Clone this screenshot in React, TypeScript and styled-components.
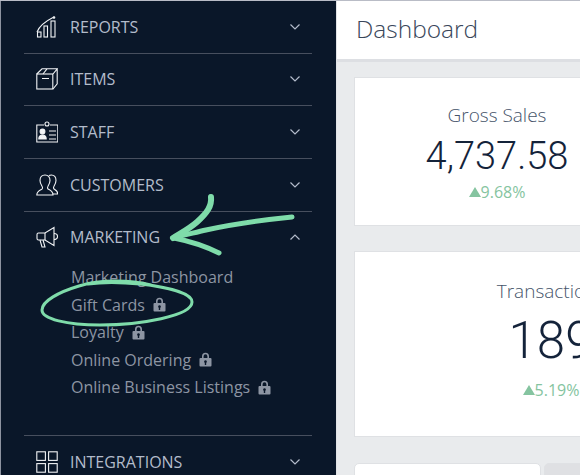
import React from 'react';
import styled, { createGlobalStyle } from 'styled-components';

const GlobalStyle = createGlobalStyle`
  html, body {
    margin: 0;
    padding: 0;
    background: #e9ebed;
  }
`;

const Page = styled.div`
  width: 580px;
  height: 475px;
  display: flex;
  overflow: hidden;
  position: relative;
  box-sizing: border-box;
  border-top: 1px solid #b9bcc6;
  font-family: 'Open Sans', 'Liberation Sans', sans-serif;
`;

const Sidebar = styled.nav`
  width: 336px;
  flex-shrink: 0;
  box-sizing: border-box;
  background: #0a1729;
  border-left: 1px solid #8d93a0;
  padding: 0 24px 0 23px;
  height: 474px;
  overflow: hidden;
`;

const Group = styled.div`
  border-bottom: 1px solid #474f5e;
  &:last-child {
    border-bottom: none;
  }
`;

const Row = styled.div`
  height: 51.67px;
  display: flex;
  align-items: center;
  padding: 0 12px;
  color: #b3bccb;
  font-size: 16px;
  text-transform: uppercase;
`;

const RowIcon = styled.span`
  width: 22px;
  height: 22px;
  margin-right: 12px;
  display: flex;
  color: #f2f4f6;
`;

const RowLabel = styled.span`
  flex: 1;
`;

const SubList = styled.ul`
  list-style: none;
  margin: 0;
  padding: 0 0 34px 47px;
`;

const SubItem = styled.li`
  height: 27.5px;
  display: flex;
  align-items: center;
  gap: 8px;
  color: #8d95a3;
  font-size: 16px;
`;

const Main = styled.main`
  flex: 1;
  min-width: 0;
  border-left: 1px solid #e1e3e6;
`;

const Header = styled.header`
  height: 58px;
  background: #fff;
  border-bottom: 3px solid #dddfe3;
  display: flex;
  align-items: center;
  padding-left: 19px;
`;

const Title = styled.h1`
  margin: 0 0 3px;
  font-size: 24.5px;
  font-weight: 300;
  color: #39465a;
`;

const Content = styled.div`
  padding: 15px 0 0 17px;
  display: flex;
  flex-direction: column;
  gap: 25px;
`;

const Card = styled.section<{ $wide?: boolean }>`
  width: ${(p) => (p.$wide ? 394 : 286)}px;
  height: ${(p) => (p.$wide ? 186 : 149)}px;
  box-sizing: border-box;
  background: #fff;
  border: 1px solid #dfe1e4;
  display: flex;
  flex-direction: column;
  align-items: center;
  justify-content: center;
  padding: ${(p) => (p.$wide ? '0 0 8px' : '2px 0 0')};
`;

const CardTitle = styled.div`
  font-size: 19px;
  font-weight: 300;
  color: #46546a;
  line-height: 24px;
`;

const CardValue = styled.div<{ $large?: boolean }>`
  font-family: Roboto, 'Liberation Sans', sans-serif;
  font-weight: 300;
  color: #14233a;
  font-size: ${(p) => (p.$large ? 51 : 38)}px;
  line-height: ${(p) => (p.$large ? 76 : 50)}px;
  padding-top: ${(p) => (p.$large ? 0 : 4)}px;
`;

const Delta = styled.div`
  font-size: 16px;
  line-height: 22px;
  color: #85c4a0;
  display: flex;
  align-items: center;
`;

const BottomRow = styled.div`
  display: flex;
  gap: 3px;
  margin-top: 1px;
`;

const SmallCard = styled.div<{ $muted?: boolean }>`
  width: ${(p) => (p.$muted ? 120 : 187)}px;
  height: 40px;
  flex-shrink: 0;
  box-sizing: border-box;
  border: 1px solid #dfe1e4;
  border-radius: 5px 5px 0 0;
  background: ${(p) => (p.$muted ? '#dfe0e3' : '#fff')};
`;

const Scribble = styled.svg`
  position: absolute;
  left: 0;
  top: -1px;
  pointer-events: none;
`;

const Chevron = ({ up }: { up?: boolean }) => (
  <svg width="10" height="6" viewBox="0 0 10 6" fill="none" stroke="#b3bccb" strokeWidth="1.2">
    <path d={up ? 'M.5 5.5 5 1l4.5 4.5' : 'M.5.5 5 5 9.5.5'} />
  </svg>
);

const Lock = () => (
  <svg width="13" height="15" viewBox="0 0 13 15">
    <path
      fill="#8d95a3"
      fillRule="evenodd"
      d="M3 6V4.200a3.500 3.500 0 0 1 7 0V6h1.500a1 1 0 0 1 1 1v6.500a1 1 0 0 1-1 1h-10a1 1 0 0 1-1-1V7a1 1 0 0 1 1-1H3Zm1.600 0h3.800V4.200a1.900 1.900 0 0 0-3.800 0V6Zm1.900 2.200a1.400 1.400 0 0 0-.7 2.600V13h1.400v-2.200a1.400 1.400 0 0 0-.7-2.600Z"
    />
  </svg>
);

const Line = ({ children }: { children: React.ReactNode }) => (
  <svg width="22" height="22" viewBox="0 0 22 22" fill="none" stroke="currentColor" strokeWidth="1.1">
    {children}
  </svg>
);

const icons = {
  reports: (
    <Line>
      <path d="M1 16C3 11 8 6 17 1.500" />
      <circle cx="18" cy="1.500" r=".8" fill="currentColor" />
      <rect x="1.500" y="16" width="3.500" height="5" />
      <rect x="8" y="10" width="3.500" height="11" />
      <rect x="15" y="5" width="4" height="16" />
    </Line>
  ),
  items: (
    <Line>
      <rect x=".8" y="6" width="16" height="15" />
      <path d="M.8 6 6 .8h15.200L17 6M21.200.8v15L17 21M6 10.500h7M11 .8 7 6" />
    </Line>
  ),
  staff: (
    <Line>
      <path d="M8 4H.8v17h21V4H14" />
      <circle cx="11" cy="3" r="2" />
      <circle cx="6.500" cy="10.500" r="2.400" fill="currentColor" />
      <path d="M2.800 18c0-3 1.500-4 3.700-4s3.700 1 3.700 4Z" fill="currentColor" />
      <path d="M13 10h7M13 14h7M13 18h7" />
    </Line>
  ),
  customers: (
    <Line>
      <path d="M7 21H.8c0-3.500 2.500-4.500 5-5.800 1-.6.800-2 .2-2.900C4.500 10 4 8.500 4 6.500 4 3 6 1 9 1s5 2 5 5.500c0 2-.6 3.500-2 5.800-.6.900-.7 2.300.3 2.900 2.500 1.300 4.700 2.300 4.700 5.800H7Z" />
      <path d="M13 1.600C13.800 1.200 14.500 1 15.200 1c3 0 4.800 2 4.800 5.500 0 2-.6 3.500-2 5.800-.6.900-.7 2.300.3 2.900 1.700.9 3.500 1.800 3.500 4.800H17" />
    </Line>
  ),
  marketing: (
    <Line>
      <path d="M1 8.500C1 7.500 1.500 7 2.500 7H9L18 1.500v18L9 14H2.500C1.500 14 1 13.500 1 12.500Z" />
      <path d="M9 7v7M4 14l2 7h3l-2-7M18 7.500c2 0 3.500 1.200 3.500 3s-1.500 3-3.500 3" />
    </Line>
  ),
  integrations: (
    <Line>
      <rect x=".8" y=".8" width="8.600" height="8.600" />
      <rect x="12.600" y=".8" width="8.600" height="8.600" />
      <rect x=".8" y="12.600" width="8.600" height="8.600" />
      <rect x="12.600" y="12.600" width="8.600" height="8.600" />
    </Line>
  ),
};

const subItems = [
  { label: 'Marketing Dashboard', locked: false },
  { label: 'Gift Cards', locked: true },
  { label: 'Loyalty', locked: true },
  { label: 'Online Ordering', locked: true },
  { label: 'Online Business Listings', locked: true },
];

const NavRow = ({ icon, label, open }: { icon: React.ReactNode; label: string; open?: boolean }) => (
  <Row>
    <RowIcon>{icon}</RowIcon>
    <RowLabel>{label}</RowLabel>
    <Chevron up={open} />
  </Row>
);

const Up = () => (
  <svg width="12" height="10" viewBox="0 0 12 10">
    <path d="M6 0l6 10H0Z" fill="#85c4a0" />
  </svg>
);

export default function App() {
  return (
    <>
      <GlobalStyle />
      <Page>
        <Sidebar>
          <Group><NavRow icon={icons.reports} label="Reports" /></Group>
          <Group><NavRow icon={icons.items} label="Items" /></Group>
          <Group><NavRow icon={icons.staff} label="Staff" /></Group>
          <Group><NavRow icon={icons.customers} label="Customers" /></Group>
          <Group>
            <NavRow icon={icons.marketing} label="Marketing" open />
            <SubList>
              {subItems.map((item) => (
                <SubItem key={item.label}>
                  {item.label}
                  {item.locked && <Lock />}
                </SubItem>
              ))}
            </SubList>
          </Group>
          <Group><NavRow icon={icons.integrations} label="Integrations" /></Group>
        </Sidebar>
        <Main>
          <Header>
            <Title>Dashboard</Title>
          </Header>
          <Content>
            <Card>
              <CardTitle>Gross Sales</CardTitle>
              <CardValue>4,737.58</CardValue>
              <Delta><Up />9.68%</Delta>
            </Card>
            <Card $wide>
              <CardTitle>Transactions</CardTitle>
              <CardValue $large>189</CardValue>
              <Delta><Up />5.19%</Delta>
            </Card>
            <BottomRow>
              <SmallCard />
              <SmallCard $muted />
            </BottomRow>
          </Content>
        </Main>
        <Scribble width="336" height="340" viewBox="0 0 336 340" fill="none" stroke="#7fdcaa" strokeLinecap="round" strokeLinejoin="round">
          <path d="M211 197c1 9-4 16-14 25-8 7-16 11-24 16" strokeWidth="6" />
          <path d="M292 217c-30 3-58 7-86 13-12 3-24 5-33 8" strokeWidth="5" />
          <path d="M174 238c15 3 31 8 45 15" strokeWidth="5" />
          <path
            d="M151 285c-20-5-50-6-72 1-20 6-37 15-37 24 0 9 25 15 58 15 40 0 92-9 92-23 0-9-25-15-52-18-20-2-38-2-52 0"
            strokeWidth="3"
          />
        </Scribble>
      </Page>
    </>
  );
}
